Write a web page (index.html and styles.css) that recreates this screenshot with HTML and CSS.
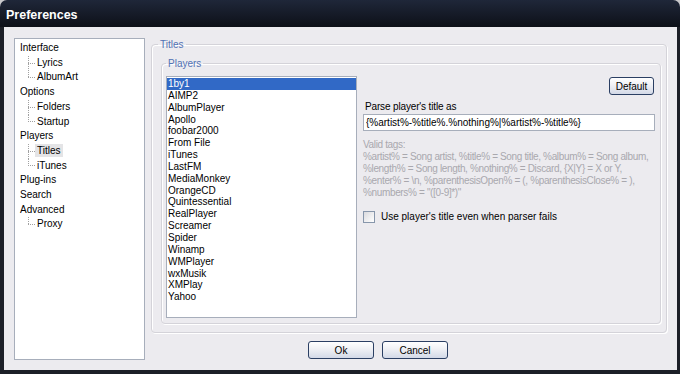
FILE: index.html
```html
<!DOCTYPE html>
<html lang="en">
<head>
    <meta charset="UTF-8">
    <title>Preferences</title>
    <link rel="stylesheet" href="styles.css">
</head>
<body>
    <div class="window">
        <div class="titlebar">Preferences</div>
        <div class="client">
            <ul class="tree">
                <li>Interface
                    <ul>
                        <li>Lyrics</li>
                        <li class="last">AlbumArt</li>
                    </ul>
                </li>
                <li>Options
                    <ul>
                        <li>Folders</li>
                        <li class="last">Startup</li>
                    </ul>
                </li>
                <li>Players
                    <ul>
                        <li><span class="sel">Titles</span></li>
                        <li class="last">iTunes</li>
                    </ul>
                </li>
                <li>Plug-ins</li>
                <li>Search</li>
                <li>Advanced
                    <ul>
                        <li class="last">Proxy</li>
                    </ul>
                </li>
            </ul>

            <div class="main">
                <fieldset class="group titles">
                    <legend>Titles</legend>
                    <fieldset class="group players">
                        <legend>Players</legend>
                        <div class="player-row">
                            <ul class="listbox">
                                <li class="selected">1by1</li>
                                <li>AIMP2</li>
                                <li>AlbumPlayer</li>
                                <li>Apollo</li>
                                <li>foobar2000</li>
                                <li>From File</li>
                                <li>iTunes</li>
                                <li>LastFM</li>
                                <li>MediaMonkey</li>
                                <li>OrangeCD</li>
                                <li>Quintessential</li>
                                <li>RealPlayer</li>
                                <li>Screamer</li>
                                <li>Spider</li>
                                <li>Winamp</li>
                                <li>WMPlayer</li>
                                <li>wxMusik</li>
                                <li>XMPlay</li>
                                <li>Yahoo</li>
                            </ul>
                            <div class="parser">
                                <div class="default-row">
                                    <button class="btn btn-default">Default</button>
                                </div>
                                <label class="caption" for="pattern">Parse player's title as</label>
                                <input type="text" id="pattern" class="field" value="{%artist%-%title%.%nothing%|%artist%-%title%}">
                                <p class="tags">
                                    Valid tags:<br>
                                    %artist% = Song artist, %title% = Song title, %album% = Song album,<br>
                                    %length% = Song length, %nothing% = Discard, {X|Y} = X or Y,<br>
                                    %enter% = \n, %parenthesisOpen% = (, %parenthesisClose% = ),<br>
                                    %numbers% = "([0-9]*)"
                                </p>
                                <label class="check"><span class="box"></span>Use player's title even when parser fails</label>
                            </div>
                        </div>
                    </fieldset>
                </fieldset>
                <div class="actions">
                    <button class="btn btn-wide">Ok</button>
                    <button class="btn btn-wide">Cancel</button>
                </div>
            </div>
        </div>
    </div>
</body>
</html>
```

FILE: styles.css
```css
body {
    margin: 0;
    background: #c9c9cc;
    font-family: "Liberation Sans", Arial, sans-serif;
    font-size: 10px;
    color: #000;
}
.window {
    width: 680px;
    height: 374px;
    box-sizing: border-box;
    display: flex;
    flex-direction: column;
    padding: 0 3px 4px 4px;
    border-radius: 7px 7px 0 0;
    background: linear-gradient(#1f2739, #0d1018 27px, #1c1f27 27px);
}
.titlebar {
    height: 24px;
    padding: 3px 0 0 2px;
    line-height: 24px;
    color: #fff;
    font-size: 12.5px;
    font-weight: bold;
}
.client {
    flex: 1;
    display: flex;
    gap: 6px;
    padding: 11px 10px 10px 10px;
    background: #ecebef;
}

/* tree */
.tree {
    width: 131px;
    height: 322px;
    box-sizing: border-box;
    margin: 0;
    padding: 2px 0 0 5px;
    list-style: none;
    background: #fff;
    border: 1px solid #a7aebb;
    line-height: 14.7px;
}
.tree ul {
    margin: 0;
    padding: 0;
    list-style: none;
}
.tree ul li {
    padding-left: 17px;
    background:
        repeating-linear-gradient(to bottom, #a0a0a0 0 1px, transparent 1px 2px) 8px 0 / 1px 100% no-repeat,
        repeating-linear-gradient(to right, #a0a0a0 0 1px, transparent 1px 2px) 8px 50% / 7px 1px no-repeat;
}
.tree ul li.last {
    background:
        repeating-linear-gradient(to bottom, #a0a0a0 0 1px, transparent 1px 2px) 8px 0 / 1px 50% no-repeat,
        repeating-linear-gradient(to right, #a0a0a0 0 1px, transparent 1px 2px) 8px 50% / 7px 1px no-repeat;
}
.sel {
    background: #e4e4e6;
    padding: 1px 2px;
    margin-left: -2px;
}

/* groups */
.main {
    width: 516px;
    display: flex;
    flex-direction: column;
}
.group {
    margin: 0;
    min-width: 0;
    border: 1px solid #d4d3d9;
    border-radius: 4px;
    box-shadow: inset 1px 1px #fff, 1px 1px #fff;
}
.group legend {
    padding: 0 2px;
    line-height: 13px;
    color: #5272b4;
}
.titles {
    padding: 6px 5px 8px 9px;
}
.titles > legend {
    margin-left: -3px;
}
.players {
    padding: 6px 5px 5px 4px;
}
.player-row {
    display: flex;
    gap: 6px;
}
.listbox {
    flex: none;
    width: 191px;
    height: 242px;
    box-sizing: border-box;
    margin: 0;
    padding: 1px 0 0 0;
    list-style: none;
    background: #fff;
    border: 1px solid #a7aebb;
    line-height: 11.85px;
}
.listbox li {
    padding-left: 1px;
}
.listbox .selected {
    background: #3169c6;
    color: #fff;
}

/* parser side */
.parser {
    flex: 1;
    min-width: 0;
    display: flex;
    flex-direction: column;
}
.default-row {
    display: flex;
    justify-content: flex-end;
    padding: 1px 0 0 0;
}
.btn {
    height: 18px;
    padding: 0;
    font-family: inherit;
    font-size: 10px;
    color: #000;
    border: 1px solid #2b3f63;
    border-radius: 3px;
    background: linear-gradient(#ffffff, #eff0f4 45%, #d3d9e7);
}
.btn-default {
    width: 45px;
    margin-right: 1px;
}
.caption {
    margin-top: 5px;
    padding-left: 2px;
    line-height: 13px;
    letter-spacing: -0.15px;
}
.field {
    height: 17px;
    box-sizing: border-box;
    margin: 1px 0 0 0;
    padding: 0 2px;
    width: 100%;
    font-family: inherit;
    font-size: 10px;
    border: 1px solid #a7aebb;
    background: #fff;
}
.tags {
    margin: 8px 0 0 0;
    line-height: 12px;
    color: #a9a8ae;
    white-space: nowrap;
    letter-spacing: -0.35px;
}
.check {
    display: flex;
    align-items: center;
    gap: 6px;
    margin-top: 11px;
    line-height: 13px;
}
.box {
    width: 10px;
    height: 10px;
    border: 1px solid #8796ab;
    background: linear-gradient(135deg, #dadade, #ffffff);
}

.actions {
    display: flex;
    gap: 8px;
    margin-top: 8px;
    padding-left: 157px;
}
.btn-wide {
    width: 66px;
}
```
